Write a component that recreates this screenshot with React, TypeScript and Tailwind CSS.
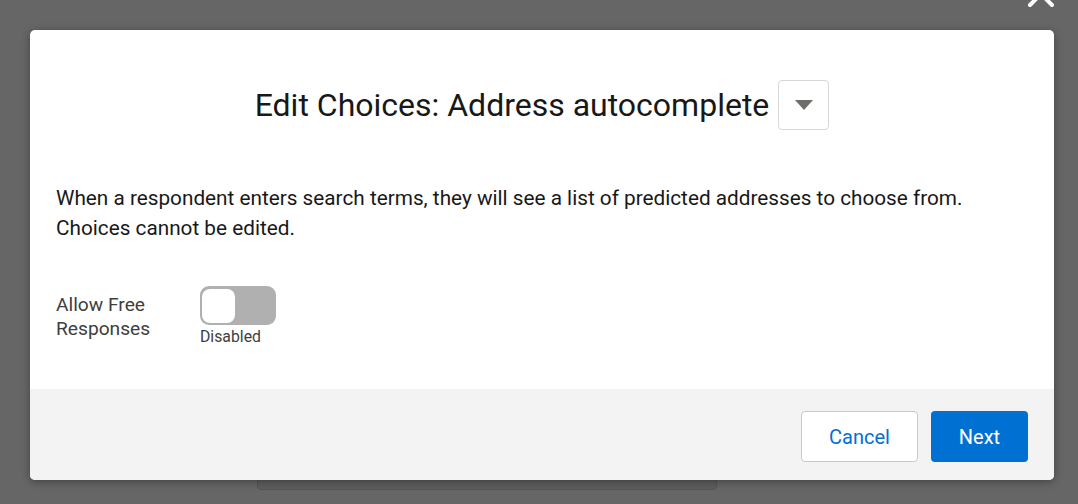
import React from "react";

function CaretDown() {
  return (
    <svg width="20" height="12" viewBox="0 0 20 12" aria-hidden>
      <path d="M1 1h18l-9 10z" fill="#706e6b" />
    </svg>
  );
}

export default function App() {
  return (
    <div
      className="relative h-[504px] w-[1078px] overflow-hidden bg-[#666666]"
      style={{ fontFamily: "Roboto, 'Noto Sans', sans-serif" }}
    >
      {/* page element peeking out under the modal */}
      <div className="absolute left-[257px] top-[440px] h-[50px] w-[460px] rounded-[4px] border border-[#555555] bg-[#5e5e5e]" />

      {/* close icon, mostly off-screen */}
      <svg
        className="absolute left-[1027px] top-[-20px]"
        width="28"
        height="28"
        viewBox="0 0 28 28"
        aria-hidden
      >
        <path d="M3 3l22 22M25 3L3 25" stroke="#ffffff" strokeWidth="4" strokeLinecap="round" />
      </svg>

      <div className="relative ml-[30px] mt-[30px] flex h-[450px] w-[1024px] flex-col overflow-hidden rounded-[5px] bg-white shadow-[0_2px_8px_rgba(0,0,0,0.35)]">
        <div className="flex items-center justify-center gap-[9px] pt-[50px]">
          <h1 className="text-[32px] leading-[38px] text-[#181818]">
            Edit Choices: Address autocomplete
          </h1>
          <button
            type="button"
            className="flex h-[50px] w-[51px] items-center justify-center rounded-[4px] border border-[#d8d8d8] bg-white"
          >
            <CaretDown />
          </button>
        </div>

        <div className="px-[26px] pt-[53px]">
          <p className="text-[20.75px] leading-[30px] text-[#181818]">
            When a respondent enters search terms, they will see a list of predicted addresses to choose from.
            <br />
            Choices cannot be edited.
          </p>

          <div className="mt-[43px] flex items-start">
            <div className="w-[144px] pt-[7px] text-[19.2px] leading-[24px] text-[#3e3e3c]">
              Allow Free
              <br />
              Responses
            </div>
            <div className="flex flex-col">
              <div className="flex h-[39px] w-[76px] items-center rounded-[9px] bg-[#b0b0b0] px-[2px]">
                <div className="h-[34px] w-[33px] rounded-[8px] bg-white" />
              </div>
              <span className="mt-[3px] text-[15.8px] leading-[18px] text-[#3e3e3c]">Disabled</span>
            </div>
          </div>
        </div>

        <div className="mt-auto flex h-[91px] items-start justify-end gap-[13px] bg-[#f3f3f3] pr-[26px] pt-[22px]">
          <button
            type="button"
            className="h-[51px] w-[117px] rounded-[4px] border border-[#c9c9c9] bg-white text-[20px] text-[#0070d2]"
          >
            Cancel
          </button>
          <button
            type="button"
            className="h-[51px] w-[97px] rounded-[4px] bg-[#0070d2] text-[20px] text-white"
          >
            Next
          </button>
        </div>
      </div>
    </div>
  );
}
